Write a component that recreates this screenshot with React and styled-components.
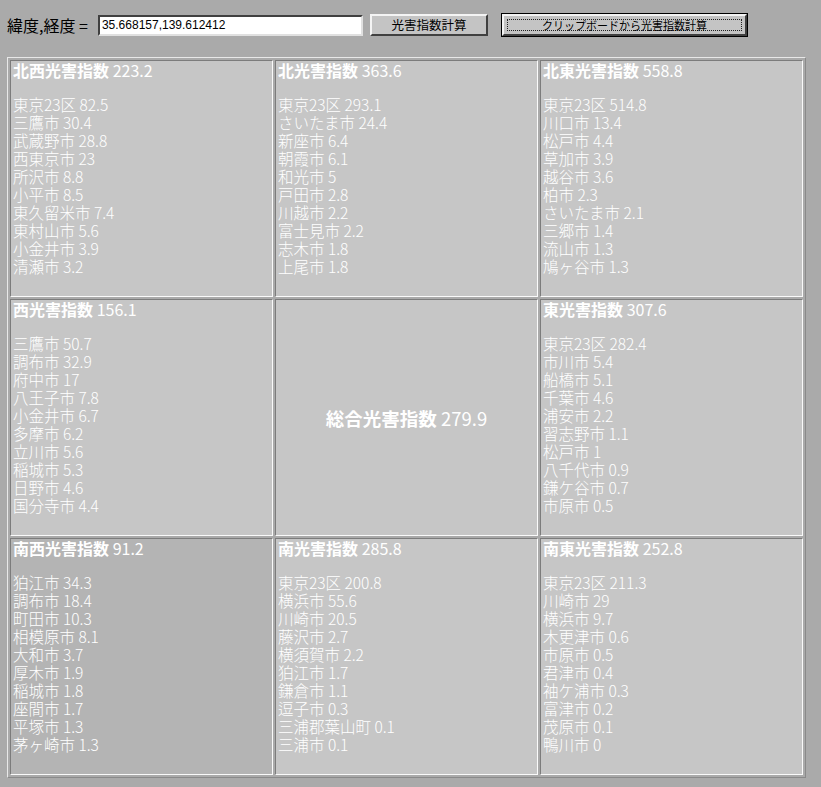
import React from 'react';
import styled, { createGlobalStyle } from 'styled-components';

const GlobalStyle = createGlobalStyle`
  html, body {
    margin: 0;
    padding: 0;
    background: #aaaaaa;
  }
  body {
    font-family: "Noto Sans CJK JP", "Liberation Sans", sans-serif;
  }
`;

const Page = styled.div`
  padding: 14px 8px 8px 7px;
`;

const TopBar = styled.form`
  display: flex;
  align-items: center;
  height: 22px;
  margin-bottom: 21px;
`;

const Label = styled.span`
  font-size: 16px;
  color: #000;
  margin-right: 10px;
  white-space: nowrap;
`;

const CoordInput = styled.input`
  box-sizing: border-box;
  width: 265px;
  height: 21px;
  margin: 0 7px 0 0;
  padding: 0 2px;
  font-family: "Liberation Sans", sans-serif;
  font-size: 12px;
  color: #000;
  background: #fff;
  border: 2px solid;
  border-color: #404040 #e0e0e0 #e0e0e0 #404040;
  outline: none;
`;

const Button = styled.button`
  box-sizing: border-box;
  width: ${p => p.$w}px;
  height: 22px;
  margin: 0 ${p => p.$gap || 0}px 0 0;
  padding: 0;
  font-family: "Noto Sans CJK JP", sans-serif;
  font-size: ${p => p.$fs}px;
  color: #000;
  background: #c4c4c4;
  border: 2px solid;
  border-color: #f4f4f4 #404040 #404040 #f4f4f4;
  outline: ${p => (p.$def ? '1px solid #000' : 'none')};
  display: flex;
  align-items: center;
  justify-content: center;
  line-height: 1;
`;

const Focus = styled.span`
  display: flex;
  align-items: center;
  justify-content: center;
  width: calc(100% - 6px);
  height: calc(100% - 6px);
  border: 1px dotted #222;
  box-sizing: border-box;
`;

const Table = styled.div`
  display: grid;
  grid-template-columns: repeat(3, 263px);
  grid-template-rows: repeat(3, 237px);
  gap: 2px;
  padding: 2px;
  width: max-content;
  border: 1px solid;
  border-color: #e8e8e8 #8a8a8a #8a8a8a #e8e8e8;
`;

const Cell = styled.div`
  box-sizing: border-box;
  border: 1px solid;
  border-color: #7c7c7c #fafafa #fafafa #7c7c7c;
  background: ${p => (p.$dark ? '#b4b4b4' : '#c6c6c6')};
  color: #fff;
  padding: 0 2px;
  ${p =>
    p.$center &&
    `
    display: flex;
    align-items: center;
    justify-content: center;
  `}
`;

const Heading = styled.div`
  font-size: 16px;
  font-weight: bold;
  line-height: 18px;
  margin-bottom: 16px;
  white-space: nowrap;
`;

const Total = styled.div`
  font-size: 18.5px;
  font-weight: bold;
  white-space: nowrap;
`;

const Num = styled.span`
  font-weight: normal;
`;

const Item = styled.div`
  font-size: 15.5px;
  line-height: 18px;
  white-space: nowrap;
  font-weight: 300;
`;

const zones = [
  { title: '北西光害指数', value: '223.2', items: [['東京23区', '82.5'], ['三鷹市', '30.4'], ['武蔵野市', '28.8'], ['西東京市', '23'], ['所沢市', '8.8'], ['小平市', '8.5'], ['東久留米市', '7.4'], ['東村山市', '5.6'], ['小金井市', '3.9'], ['清瀬市', '3.2']] },
  { title: '北光害指数', value: '363.6', items: [['東京23区', '293.1'], ['さいたま市', '24.4'], ['新座市', '6.4'], ['朝霞市', '6.1'], ['和光市', '5'], ['戸田市', '2.8'], ['川越市', '2.2'], ['富士見市', '2.2'], ['志木市', '1.8'], ['上尾市', '1.8']] },
  { title: '北東光害指数', value: '558.8', items: [['東京23区', '514.8'], ['川口市', '13.4'], ['松戸市', '4.4'], ['草加市', '3.9'], ['越谷市', '3.6'], ['柏市', '2.3'], ['さいたま市', '2.1'], ['三郷市', '1.4'], ['流山市', '1.3'], ['鳩ヶ谷市', '1.3']] },
  { title: '西光害指数', value: '156.1', items: [['三鷹市', '50.7'], ['調布市', '32.9'], ['府中市', '17'], ['八王子市', '7.8'], ['小金井市', '6.7'], ['多摩市', '6.2'], ['立川市', '5.6'], ['稲城市', '5.3'], ['日野市', '4.6'], ['国分寺市', '4.4']] },
  { center: true, title: '総合光害指数', value: '279.9' },
  { title: '東光害指数', value: '307.6', items: [['東京23区', '282.4'], ['市川市', '5.4'], ['船橋市', '5.1'], ['千葉市', '4.6'], ['浦安市', '2.2'], ['習志野市', '1.1'], ['松戸市', '1'], ['八千代市', '0.9'], ['鎌ケ谷市', '0.7'], ['市原市', '0.5']] },
  { dark: true, title: '南西光害指数', value: '91.2', items: [['狛江市', '34.3'], ['調布市', '18.4'], ['町田市', '10.3'], ['相模原市', '8.1'], ['大和市', '3.7'], ['厚木市', '1.9'], ['稲城市', '1.8'], ['座間市', '1.7'], ['平塚市', '1.3'], ['茅ヶ崎市', '1.3']] },
  { title: '南光害指数', value: '285.8', items: [['東京23区', '200.8'], ['横浜市', '55.6'], ['川崎市', '20.5'], ['藤沢市', '2.7'], ['横須賀市', '2.2'], ['狛江市', '1.7'], ['鎌倉市', '1.1'], ['逗子市', '0.3'], ['三浦郡葉山町', '0.1'], ['三浦市', '0.1']] },
  { title: '南東光害指数', value: '252.8', items: [['東京23区', '211.3'], ['川崎市', '29'], ['横浜市', '9.7'], ['木更津市', '0.6'], ['市原市', '0.5'], ['君津市', '0.4'], ['袖ケ浦市', '0.3'], ['富津市', '0.2'], ['茂原市', '0.1'], ['鴨川市', '0']] },
];

export default function App() {
  return (
    <>
      <GlobalStyle />
      <Page>
        <TopBar onSubmit={e => e.preventDefault()}>
          <Label>緯度,経度 =</Label>
          <CoordInput defaultValue="35.668157,139.612412" />
          <Button type="button" $w={118} $fs={12.5} $gap={14}>光害指数計算</Button>
          <Button type="button" $w={245} $fs={11} $def>
            <Focus>クリップボードから光害指数計算</Focus>
          </Button>
        </TopBar>
        <Table>
          {zones.map(z =>
            z.center ? (
              <Cell key={z.title} $center>
                <Total>
                  {z.title} <Num>{z.value}</Num>
                </Total>
              </Cell>
            ) : (
              <Cell key={z.title} $dark={z.dark}>
                <Heading>
                  {z.title} <Num>{z.value}</Num>
                </Heading>
                {z.items.map(([name, v]) => (
                  <Item key={name}>
                    {name} {v}
                  </Item>
                ))}
              </Cell>
            )
          )}
        </Table>
      </Page>
    </>
  );
}
